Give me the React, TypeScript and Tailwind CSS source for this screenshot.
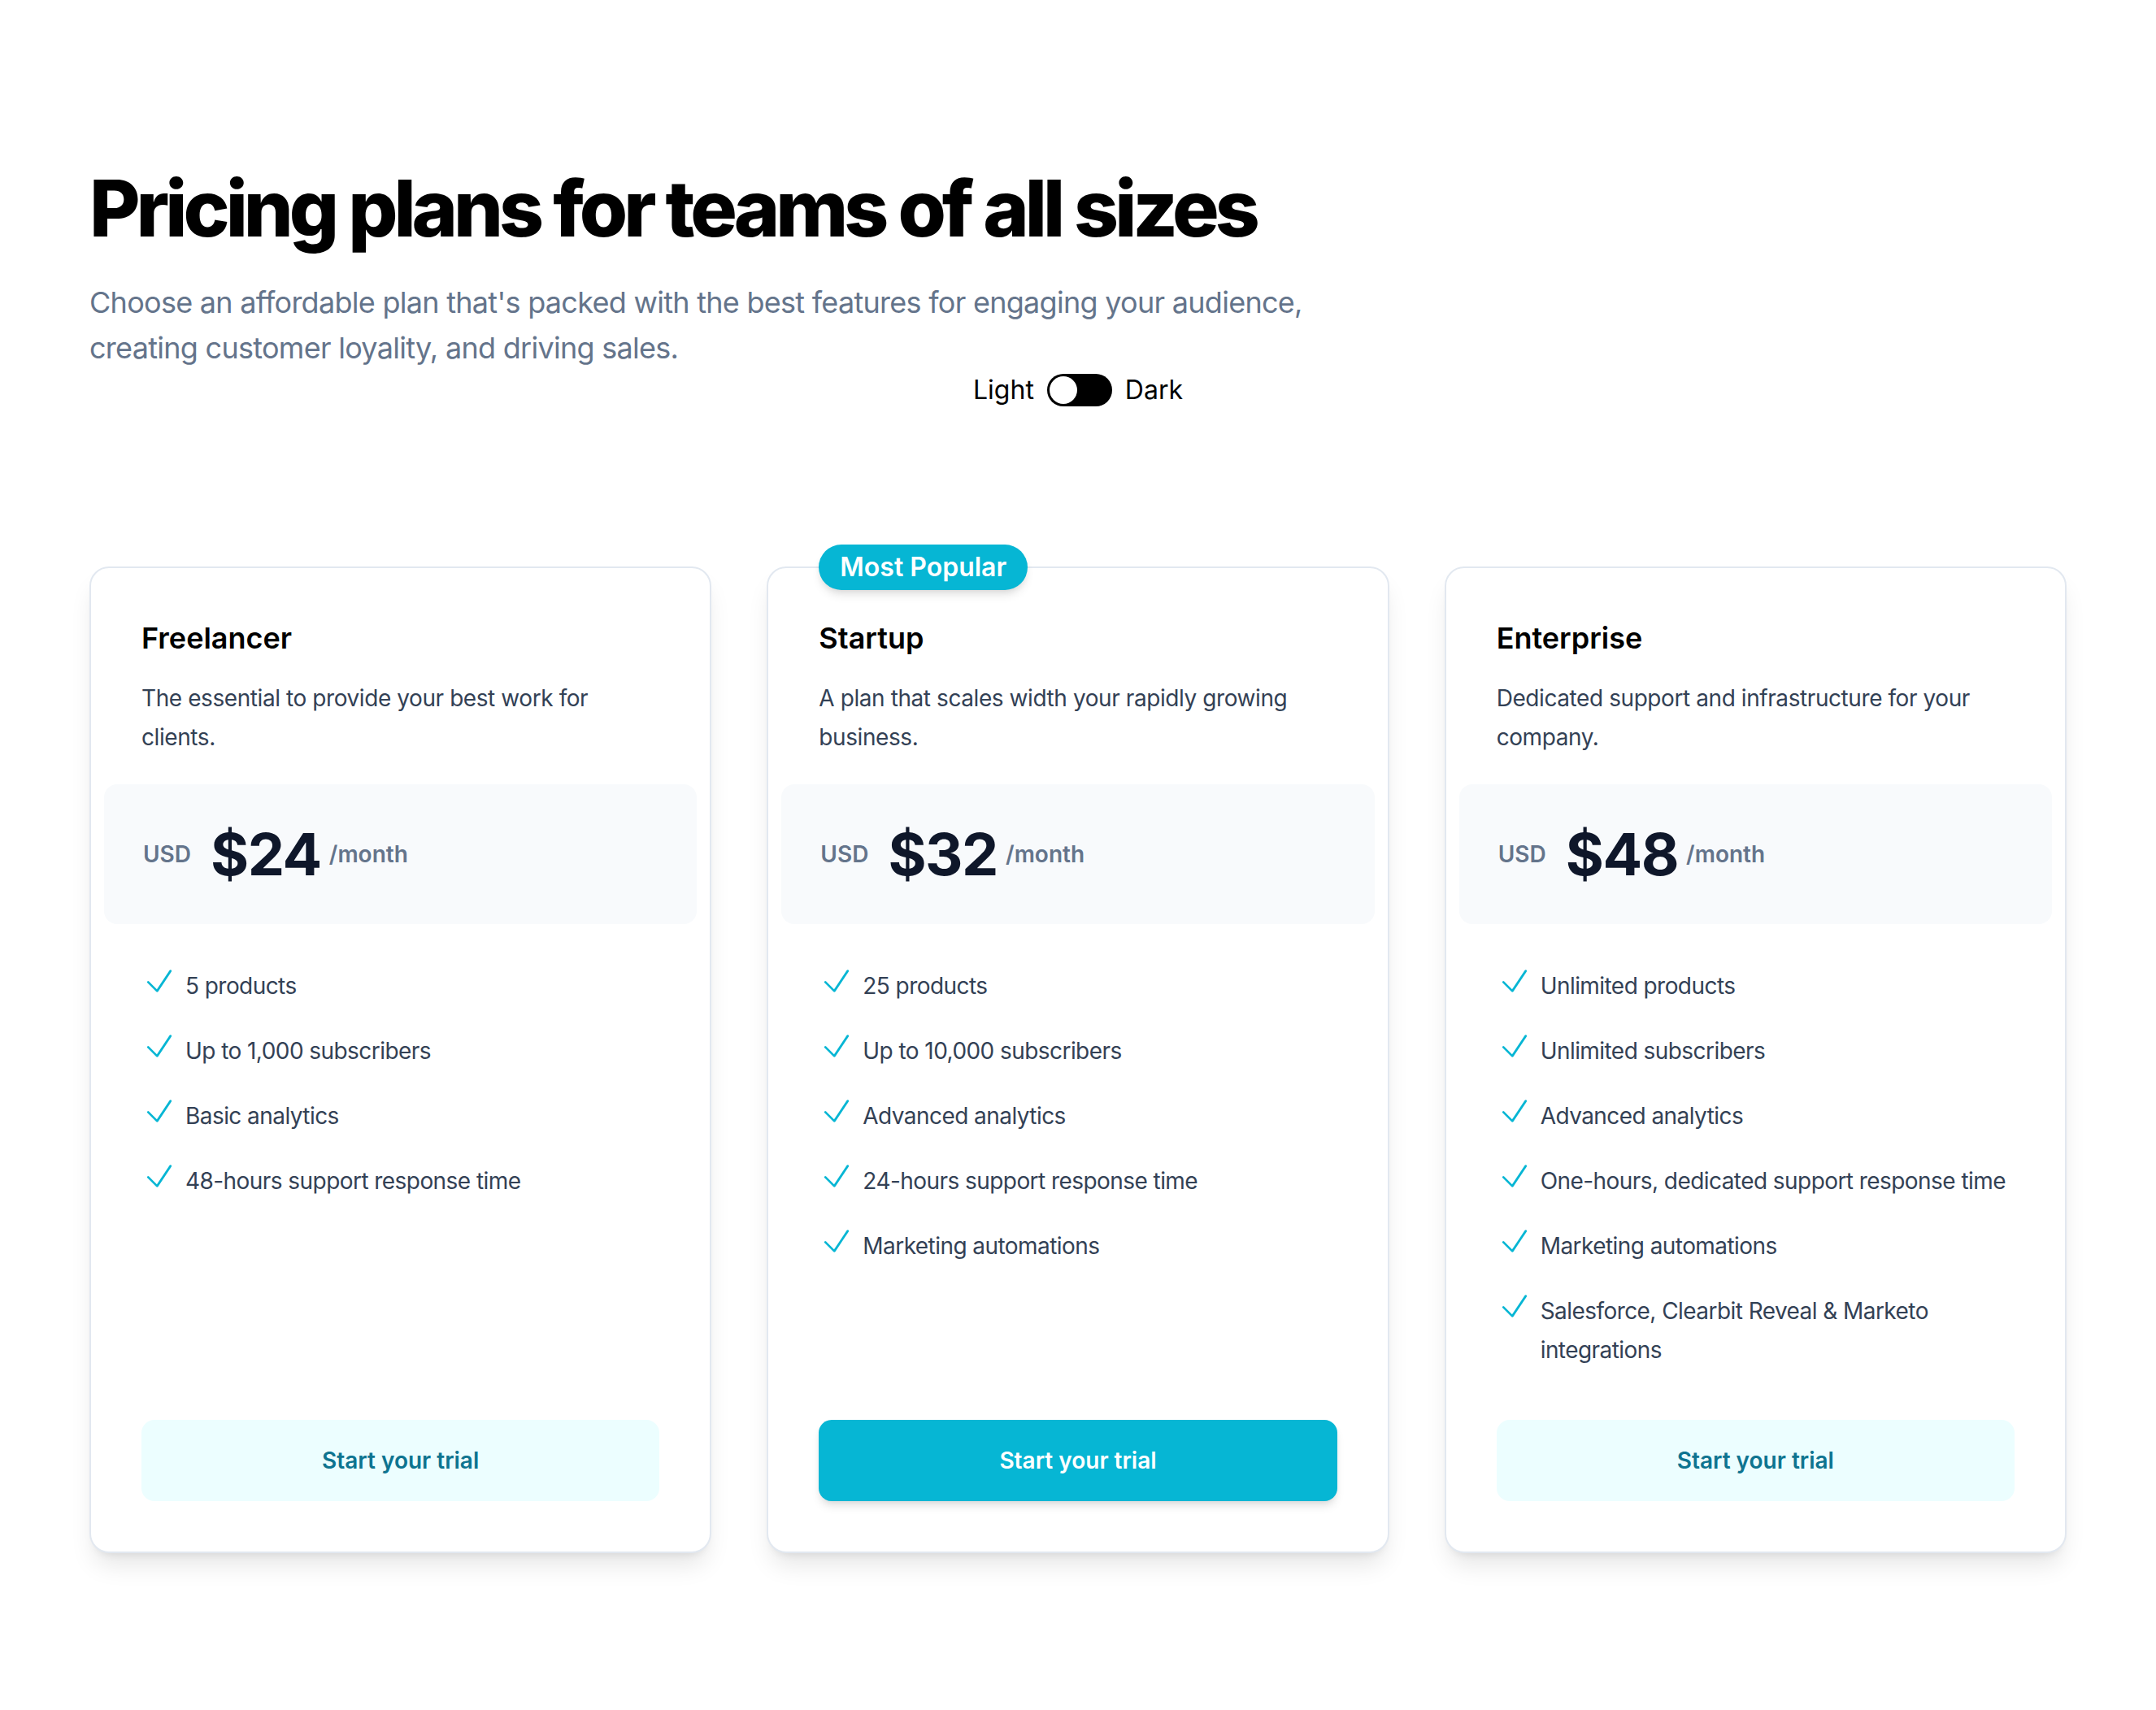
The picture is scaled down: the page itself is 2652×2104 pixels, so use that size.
import React from "react";

type Plan = {
  name: string;
  description: string;
  price: string;
  features: string[];
  featured?: boolean;
};

const PLANS: Plan[] = [
  {
    name: "Freelancer",
    description: "The essential to provide your best work for clients.",
    price: "$24",
    features: [
      "5 products",
      "Up to 1,000 subscribers",
      "Basic analytics",
      "48-hours support response time",
    ],
  },
  {
    name: "Startup",
    description: "A plan that scales width your rapidly growing business.",
    price: "$32",
    featured: true,
    features: [
      "25 products",
      "Up to 10,000 subscribers",
      "Advanced analytics",
      "24-hours support response time",
      "Marketing automations",
    ],
  },
  {
    name: "Enterprise",
    description: "Dedicated support and infrastructure for your company.",
    price: "$48",
    features: [
      "Unlimited products",
      "Unlimited subscribers",
      "Advanced analytics",
      "One-hours, dedicated support response time",
      "Marketing automations",
      "Salesforce, Clearbit Reveal & Marketo integrations",
    ],
  },
];

function CheckIcon() {
  return (
    <svg
      viewBox="0 0 24 24"
      fill="none"
      stroke="currentColor"
      strokeWidth={1.5}
      className="-mt-[4px] h-[44px] w-[44px] shrink-0 text-[#06b6d4]"
    >
      <path strokeLinecap="round" strokeLinejoin="round" d="M4.5 12.75l6 6 9-13.5" />
    </svg>
  );
}

function PlanCard({ plan }: { plan: Plan }) {
  return (
    <div className="relative flex flex-col rounded-[24px] border-2 border-[#e2e8f0] bg-white p-[62px] shadow-[0_20px_30px_-6px_rgba(0,0,0,0.1),0_8px_12px_-8px_rgba(0,0,0,0.1)]">
      {plan.featured && (
        <div className="absolute -top-[29px] left-[62px] flex h-[56px] items-center rounded-full bg-[#06b6d4] px-[26px] text-[32px] font-semibold text-white shadow-[0_8px_12px_-2px_rgba(0,0,0,0.1),0_4px_8px_-4px_rgba(0,0,0,0.1)]">
          Most Popular
        </div>
      )}

      <h3 className="text-[36px] font-semibold leading-[48px] text-black">{plan.name}</h3>
      <p className="mt-[26px] text-[28px] leading-[48px] tracking-[-0.015em] text-[#334155]">
        {plan.description}
      </p>

      {/* price */}
      <div className="-mx-[46px] mt-[34px] flex h-[172px] items-center rounded-[16px] bg-[#f8fafc] px-[48px]">
        <span className="text-[28px] font-semibold text-[#64748b]">USD</span>
        <span className="ml-[24px] text-[72px] font-bold leading-[80px] tracking-[-0.02em] text-[#0f172a]">
          {plan.price}
        </span>
        <span className="ml-[10px] text-[28px] font-semibold text-[#64748b]">/month</span>
      </div>

      <ul className="mt-[52px] flex flex-1 flex-col gap-[32px]">
        {plan.features.map((f) => (
          <li key={f} className="flex items-start gap-[10px]">
            <CheckIcon />
            <span className="text-[28px] leading-[48px] tracking-[-0.02em] text-[#334155]">{f}</span>
          </li>
        ))}
      </ul>

      <button
        className={
          plan.featured
            ? "mt-[62px] h-[100px] w-full rounded-[16px] bg-[#06b6d4] text-[28px] font-semibold text-white shadow-[0_8px_12px_-2px_rgba(0,0,0,0.1),0_4px_8px_-4px_rgba(0,0,0,0.1)]"
            : "mt-[62px] h-[100px] w-full rounded-[16px] bg-[#ecfeff] text-[28px] font-semibold text-[#0e7490]"
        }
      >
        Start your trial
      </button>
    </div>
  );
}

export default function App() {
  return (
    <div className="min-h-[2104px] bg-white px-[110px] pt-[208px] font-['Inter',sans-serif]">
      <h1 className="text-[96px] font-extrabold leading-[96px] tracking-[-0.052em] text-black">
        Pricing plans for teams of all sizes
      </h1>
      <p className="mt-[40px] max-w-[1560px] text-[36px] leading-[56px] tracking-[-0.02em] text-[#64748b]">
        Choose an affordable plan that's packed with the best features for engaging your
        audience, creating customer loyality, and driving sales.
      </p>

      {/* theme toggle */}
      <div className="-mx-[110px] flex h-[48px] items-center justify-center gap-[16px] text-[32px] text-black">
        <span>Light</span>
        <button className="flex h-[40px] w-[80px] items-center rounded-full bg-black p-[3px]">
          <span className="h-[34px] w-[34px] rounded-full bg-white" />
        </button>
        <span>Dark</span>
      </div>

      <div className="mt-[193px] grid grid-cols-3 gap-[68px]">
        {PLANS.map((p) => (
          <PlanCard key={p.name} plan={p} />
        ))}
      </div>
    </div>
  );
}
